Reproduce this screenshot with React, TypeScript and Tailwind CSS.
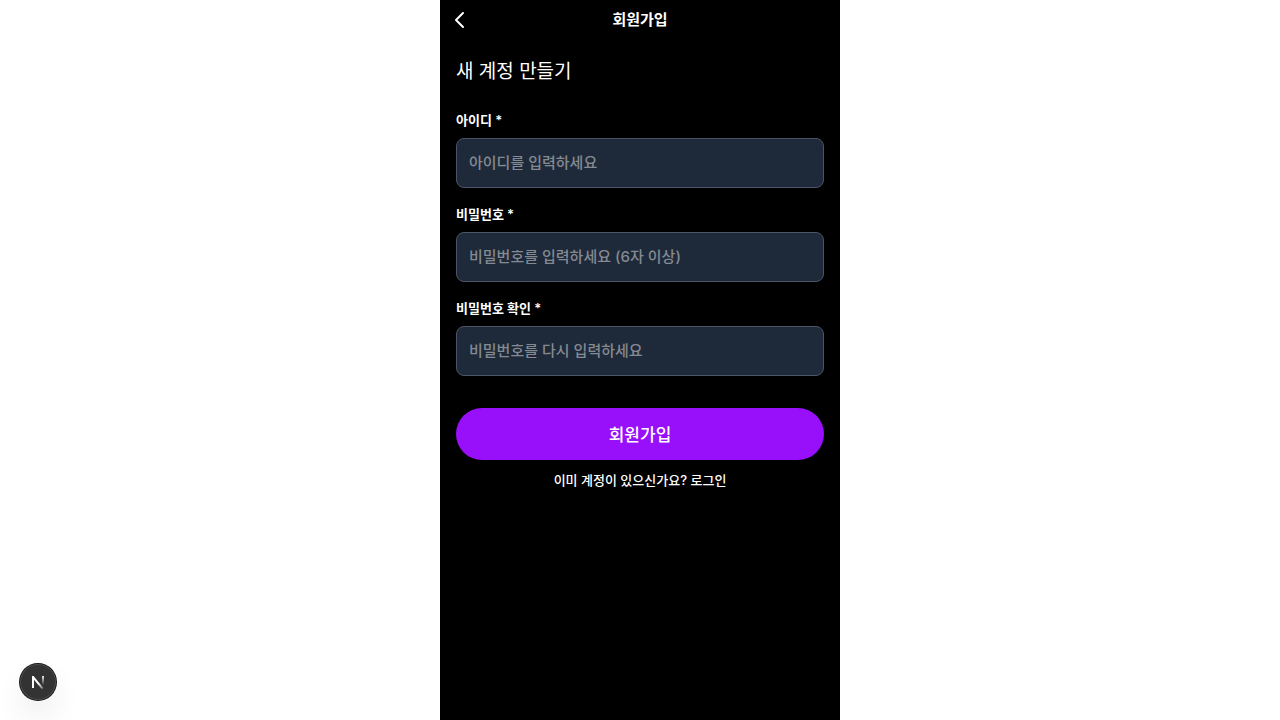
import React from "react";

type FieldProps = { id: string; label: string; type: string; placeholder: string };

function Field({ id, label, type, placeholder }: FieldProps) {
  return (
    <div className="flex flex-col gap-2">
      <label htmlFor={id} className="text-[13px] leading-5 font-semibold">{label}</label>
      <input
        id={id}
        type={type}
        placeholder={placeholder}
        className="w-full rounded-lg border border-gray-600 bg-gray-800 p-3 text-[15px] leading-6 font-medium text-white placeholder:text-[#848a92]"
      />
    </div>
  );
}

function NextMark() {
  return (
    <svg width="40" height="40" viewBox="0 0 40 40" fill="none" aria-hidden="true" className="shrink-0">
      <defs>
        <linearGradient id="stem" x1="0" y1="14" x2="0" y2="23" gradientUnits="userSpaceOnUse">
          <stop stopColor="white" />
          <stop offset="1" stopColor="white" stopOpacity="0" />
        </linearGradient>
        <linearGradient id="diagonal" x1="21" y1="21" x2="26" y2="27" gradientUnits="userSpaceOnUse">
          <stop stopColor="white" />
          <stop offset="1" stopColor="white" stopOpacity="0.2" />
        </linearGradient>
      </defs>
      <path d="M15 14.8l9.6 11.8" stroke="url(#diagonal)" strokeWidth="2" />
      <path d="M15 26V14" stroke="white" strokeWidth="2" />
      <path d="M25 14v9" stroke="url(#stem)" strokeWidth="1.8" />
    </svg>
  );
}

export default function App() {
  return (
    <div className="min-h-screen bg-white font-['Inter','Noto_Sans_CJK_KR',sans-serif] text-white">
      <main className="mx-auto min-h-screen max-w-[400px] bg-black">
        <header className="grid h-10 grid-cols-[40px_1fr_40px] items-center">
          <button type="button" aria-label="뒤로" className="flex h-10 w-10 items-center justify-center">
            <svg width="24" height="24" viewBox="0 0 24 24" fill="none" stroke="currentColor" strokeWidth="2" strokeLinecap="round" strokeLinejoin="round">
              <path d="M15 19l-7-7 7-7" />
            </svg>
          </button>
          <h1 className="text-center text-[15px] leading-6 font-bold">회원가입</h1>
        </header>
        <form className="px-4 pt-4">
          <h2 className="mb-5.5 text-[19px] leading-8 font-normal">새 계정 만들기</h2>
          <div className="flex flex-col gap-4">
            <Field id="username" label="아이디 *" type="text" placeholder="아이디를 입력하세요" />
            <Field id="password" label="비밀번호 *" type="password" placeholder="비밀번호를 입력하세요 (6자 이상)" />
            <Field id="confirm" label="비밀번호 확인 *" type="password" placeholder="비밀번호를 다시 입력하세요" />
          </div>
          <button type="submit" className="mt-8 h-13 w-full rounded-full bg-[#9810fa] pt-0.5 text-[17px] leading-6 font-medium">회원가입</button>
          <p className="mt-2.5 text-center text-[13px] leading-5 font-medium">이미 계정이 있으신가요? <a href="#login">로그인</a></p>
        </form>
      </main>
      <button
        type="button"
        aria-label="Next.js"
        className="fixed bottom-5 left-5 flex h-9 w-9 items-center justify-center rounded-full bg-[#333] shadow-[0_0_0_1px_#171717,inset_0_0_0_1px_#4a4a4a,0_16px_32px_-8px_rgba(0,0,0,0.24)]"
      >
        <NextMark />
      </button>
    </div>
  );
}
